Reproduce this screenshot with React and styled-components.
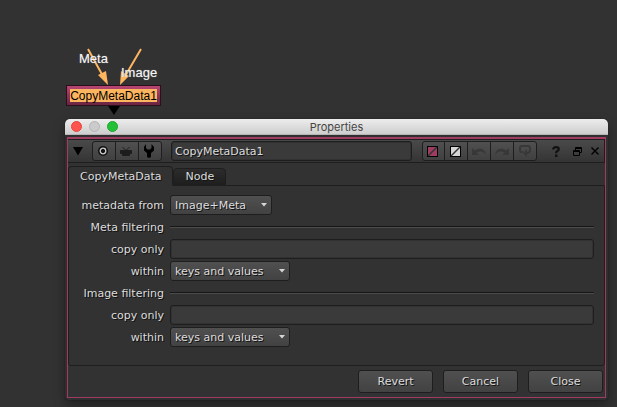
import React, { useState } from "react";
import styled, { createGlobalStyle, css } from "styled-components";

const PINK = "#a03c62";
const EDGE = "#1e1e1e";

const GlobalStyle = createGlobalStyle`
  * { box-sizing: border-box; }
  body {
    margin: 0;
    background: #323232;
    color: #dcdcdc;
    font-family: "DejaVu Sans", sans-serif;
    font-size: 11px;
  }
  button, input, select { font: inherit; color: inherit; margin: 0; }
`;

const Page = styled.main`
  min-height: 100vh;
  padding: 0 9px 7px 65px;
`;

const Graph = styled.section`
  position: relative;
  height: 119px;
`;

const Wires = styled.svg`
  position: absolute;
  left: 0;
  top: 0;
  width: 110px;
  height: 119px;
`;

const WireLabel = styled.span`
  position: absolute;
  left: ${(p) => p.$x}px;
  top: ${(p) => p.$y}px;
  color: #f4f4f4;
  font: 13px/16px "Liberation Sans", sans-serif;
  text-shadow: 0 0 1px #999;
`;

const GraphNode = styled.button`
  position: absolute;
  left: 1px;
  top: 85px;
  display: flex;
  padding: 3px;
  border: 1px solid #2a101a;
  background: linear-gradient(#b74672, #6a2440);
`;

const NodeName = styled.span`
  width: 87px;
  height: 13px;
  background: #fdb55f;
  color: #000;
  font: 12px/14px "Liberation Sans", sans-serif;
  white-space: nowrap;
`;

const Window = styled.section`
  border-radius: 5px 5px 3px 3px;
  background: #2f2f2f;
  box-shadow: 0 5px 12px rgba(0, 0, 0, 0.35), 0 0 1px #111;
`;

const TitleBar = styled.header`
  display: grid;
  grid-template-columns: 1fr auto 1fr;
  align-items: center;
  height: 16px;
  padding: 0 6px;
  border-radius: 5px 5px 0 0;
  border-bottom: 1px solid #b5b5b5;
  background: linear-gradient(#ededed, #cecece);
`;

const Lights = styled.div`
  display: flex;
  gap: 7px;
`;

const Light = styled.button`
  width: 11px;
  height: 11px;
  padding: 0;
  border: 1px solid ${(p) => p.$edge};
  border-radius: 50%;
  background: ${(p) => p.$fill};
`;

const Title = styled.h1`
  margin: 0;
  color: #444;
  font: 11px/14px Inter, sans-serif;
`;

const WindowBody = styled.div`
  padding: 2px;
`;

const Frame = styled.div`
  border: 1px solid ${PINK};
  border-top-width: 2px;
  background: #323232;
`;

const Toolbar = styled.div`
  display: flex;
  align-items: center;
  height: 24px;
  padding: 0 5px 0 4px;
  border: 1px solid ${EDGE};
  border-left: 0;
  background: linear-gradient(#4a4a4a, #343434);
`;

const IconButton = styled.button`
  display: flex;
  align-items: center;
  justify-content: center;
  width: ${(p) => p.$w || 12}px;
  height: 18px;
  padding: 0 ${(p) => (p.$lean ? 2 : 0)}px 0 0;
  border: 0;
  background: none;
`;

const ButtonGroup = styled.div`
  display: flex;
  flex: none;
  margin-left: ${(p) => p.$gap}px;
  border: 1px solid ${EDGE};
  border-radius: 3px;
  background: linear-gradient(#505050, #404040);
  button + button { border-left: 1px solid ${EDGE}; }
`;

const inset = css`
  height: 20px;
  min-width: 0;
  padding: 0 3px;
  border: 1px solid ${EDGE};
  border-radius: 3px;
  background: #3a3a3a;
  box-shadow: inset 0 0 0 1px #323232;
  text-shadow: 1px 1px 0 #111;
  outline: none;
`;

const NameInput = styled.input`
  ${inset}
  flex: 1;
  margin-left: 9px;
`;

const WindowActions = styled.div`
  display: flex;
  align-items: center;
  gap: 8px;
  margin-left: 12px;
`;

const Tabs = styled.div`
  display: flex;
  align-items: flex-end;
  height: 22px;
  padding-top: 2px;
`;

const Tab = styled.button`
  height: ${(p) => (p.$active ? 20 : 17)}px;
  margin-bottom: ${(p) => (p.$active ? -1 : 0)}px;
  padding: 0 11px;
  border: 1px solid ${EDGE};
  border-radius: 4px 4px 0 0;
  border-bottom-color: ${(p) => (p.$active ? "#323232" : EDGE)};
  background: ${(p) => (p.$active ? "#323232" : "linear-gradient(#2c2c2c, #1f1f1f)")};
  text-shadow: 1px 1px 0 #111;
  z-index: ${(p) => (p.$active ? 1 : 0)};
`;

const Panel = styled.div`
  display: grid;
  grid-template-columns: 95px 1fr;
  grid-auto-rows: 20px;
  align-items: center;
  gap: 2px 6px;
  padding: 9px 10px 18px 0;
  border: 1px solid ${EDGE};
  border-radius: 0 0 3px 3px;
`;

const Label = styled.label`
  text-align: right;
  white-space: nowrap;
  text-shadow: 1px 1px 0 #111;
`;

const Divider = styled.hr`
  width: 100%;
  margin: 0;
  border: 0;
  border-top: 1px solid #161616;
  border-bottom: 1px solid #4c4c4c;
`;

const Field = styled.input`
  ${inset}
  width: 100%;
`;

const SelectBox = styled.div`
  position: relative;
  justify-self: start;
  width: ${(p) => p.$w}px;
  height: 20px;
  select {
    width: 100%;
    height: 100%;
    padding: 0 20px 0 4px;
    appearance: none;
    border: 1px solid ${EDGE};
    border-radius: 3px;
    background: linear-gradient(#505050, #424242);
    text-shadow: 1px 1px 0 #111;
    outline: none;
  }
  svg {
    position: absolute;
    right: 5px;
    top: 8px;
    pointer-events: none;
  }
`;

const Footer = styled.footer`
  display: flex;
  justify-content: flex-end;
  gap: 10px;
  padding: 4px 2px 4px;
`;

const PushButton = styled.button`
  width: 75px;
  height: 23px;
  padding: 0;
  border: 1px solid ${EDGE};
  border-radius: 3px;
  background: linear-gradient(#505050, #424242);
  text-shadow: 1px 1px 0 #111;
`;

function Select({ id, width, options }) {
  return (
    <SelectBox $w={width}>
      <select id={id}>
        {options.map((o) => <option key={o}>{o}</option>)}
      </select>
      <svg width="6" height="4" aria-hidden="true"><path d="M0 0H6L3 3.5Z" fill="#d6d6d6" /></svg>
    </SelectBox>
  );
}

function Swatch({ fill }) {
  return (
    <svg width="11" height="11" viewBox="0 0 11 11">
      <rect x=".5" y=".5" width="10" height="10" fill={fill} stroke="#000" />
      <path d="M1 10L10 1" stroke="#333" strokeWidth="1.5" />
    </svg>
  );
}

function FilterGroup({ name }) {
  const key = name.toLowerCase();
  return (
    <>
      <Label as="span">{name} filtering</Label>
      <Divider />
      <Label htmlFor={key + "-only"}>copy only</Label>
      <Field id={key + "-only"} />
      <Label htmlFor={key + "-within"}>within</Label>
      <Select id={key + "-within"} width={120} options={["keys and values", "keys only", "values only"]} />
    </>
  );
}

export default function App() {
  const [name, setName] = useState("CopyMetaData1");
  return (
    <Page>
      <GlobalStyle />
      <Graph>
        <Wires viewBox="0 0 110 119" aria-hidden="true">
          <g stroke="#fdb55f" strokeWidth="2">
            <path d="M23 49L39 78M76 49L59 78" />
          </g>
          <path d="M43 85L33 75L41 71ZM55 85L56 71L64 76Z" fill="#fdb55f" />
          <path d="M43 106H55L49 115Z" fill="#000" />
        </Wires>
        <WireLabel $x={14} $y={51}>Meta</WireLabel>
        <WireLabel $x={56} $y={65}>Image</WireLabel>
        <GraphNode><NodeName>CopyMetaData1</NodeName></GraphNode>
      </Graph>

      <Window>
        <TitleBar>
          <Lights>
            <Light aria-label="Close window" $fill="#ff544d" $edge="#e8443e" />
            <Light aria-label="Minimize window" $fill="#cbcbcb" $edge="#b4b4b4" />
            <Light aria-label="Zoom window" $fill="#24c138" $edge="#1aa72b" />
          </Lights>
          <Title>Properties</Title>
        </TitleBar>
        <WindowBody>
          <Frame>
            <Toolbar>
              <IconButton aria-label="Collapse" $w={20}>
                <svg width="20" height="9"><path d="M1 0H11L6 8.5Z" fill="#000" /></svg>
              </IconButton>
              <ButtonGroup $gap={0}>
                <IconButton aria-label="Center node" $w={22} $lean>
                  <svg width="10" height="10" viewBox="0 0 10 10">
                    <circle cx="5" cy="5" r="5" fill="#111" />
                    <circle cx="5" cy="5" r="2.8" fill="none" stroke="#ccc" strokeWidth="1.3" />
                  </svg>
                </IconButton>
                <IconButton aria-label="Node input" $w={23} $lean>
                  <svg width="12" height="11" viewBox="0 0 12 11" fill="#1d1d1d">
                    <path d="M2.5 1L6 4.5L9.5 1" fill="none" stroke="#1d1d1d" />
                    <rect x="2" y="4" width="8" height="6" rx="1" />
                    <rect x="0" y="4" width="12" height="4" rx="1" />
                  </svg>
                </IconButton>
                <IconButton aria-label="Settings" $w={23} $lean>
                  <svg width="12" height="14" viewBox="0 0 12 14" fill="#000">
                    <path d="M3 0V4L4.5 5.5H7L8.5 4V0L11 3V6.5L8 9V13L6 14L4 13V9L1 6.5V3Z" />
                  </svg>
                </IconButton>
              </ButtonGroup>
              <NameInput aria-label="Node name" value={name} onChange={(e) => setName(e.target.value)} />
              <ButtonGroup $gap={10}>
                <IconButton aria-label="Node colour" $w={21} $lean><Swatch fill="#a03c62" /></IconButton>
                <IconButton aria-label="Interface colour" $w={23} $lean><Swatch fill="#d6d6d6" /></IconButton>
                <IconButton aria-label="Undo" $w={23}>
                  <svg width="14" height="9" viewBox="0 0 14 9" fill="#383838">
                    <path d="M0 1V8H7L4.5 5.5C9 3.5 12 4.5 13.5 8C14 2 8 0 2.5 3.5Z" />
                  </svg>
                </IconButton>
                <IconButton aria-label="Redo" $w={23}>
                  <svg width="14" height="9" viewBox="0 0 14 9" fill="#383838">
                    <path d="M14 1V8H7L9.5 5.5C5 3.5 2 4.5 .5 8C0 2 6 0 11.5 3.5Z" />
                  </svg>
                </IconButton>
                <IconButton aria-label="Revert" $w={23}>
                  <svg width="12" height="12" viewBox="0 0 12 12">
                    <path d="M4 7H2Q1 7 1 5V3Q1 1 3 1H9Q11 1 11 3V5Q11 8 8 8H7" fill="none" stroke="#383838" strokeWidth="2" />
                    <path d="M8 4V12L4 8Z" fill="#383838" />
                  </svg>
                </IconButton>
              </ButtonGroup>
              <WindowActions>
                <IconButton aria-label="Help" $w={14}>
                  <svg width="8" height="11" viewBox="0 0 8 11">
                    <path d="M1.2 3.5Q1.2 1.2 4 1.2Q6.8 1.2 6.8 3.2Q6.8 4.5 5 5.3Q4.2 5.8 4.2 7.2" fill="none" stroke="#111" strokeWidth="2.2" />
                    <rect x="3" y="8.5" width="2.4" height="2.5" fill="#111" />
                  </svg>
                </IconButton>
                <IconButton aria-label="Float">
                  <svg width="9" height="9" viewBox="0 0 9 9" fill="none" stroke="#000">
                    <path d="M2.5 3V.5H8.5V5.5H6.5M2 1.5H9" />
                    <path d="M.5 3.5H6.5V8.5H.5ZM0 4.5H7" />
                  </svg>
                </IconButton>
                <IconButton aria-label="Close panel" $w={8}>
                  <svg width="8" height="8"><path d="M.5 .5L7.5 7.5M7.5 .5L.5 7.5" stroke="#000" strokeWidth="1.4" /></svg>
                </IconButton>
              </WindowActions>
            </Toolbar>
            <Tabs role="tablist">
              <Tab role="tab" aria-selected="true" $active>CopyMetaData</Tab>
              <Tab role="tab" aria-selected="false">Node</Tab>
            </Tabs>
            <Panel role="tabpanel">
              <Label htmlFor="source">metadata from</Label>
              <Select id="source" width={102} options={["Image+Meta", "Meta+Image", "Meta only"]} />
              <FilterGroup name="Meta" />
              <FilterGroup name="Image" />
            </Panel>
            <Footer>
              <PushButton>Revert</PushButton>
              <PushButton>Cancel</PushButton>
              <PushButton>Close</PushButton>
            </Footer>
          </Frame>
        </WindowBody>
      </Window>
    </Page>
  );
}
